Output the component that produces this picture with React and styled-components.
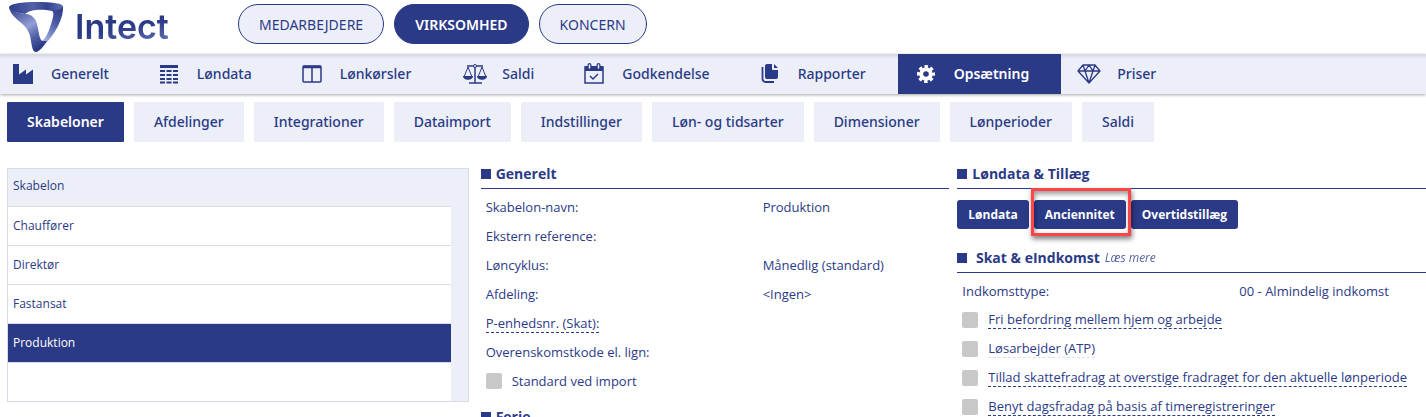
import React, { useState } from 'react';
import styled, { createGlobalStyle } from 'styled-components';

const GlobalStyle = createGlobalStyle`
  :root {
    --primary-color: #2b3a87;
    --soft-color: #eceff8;
    --line-color: #d8dbe8;
  }

  * {
    box-sizing: border-box;
  }

  body {
    margin: 0;
    background: #fff;
    color: var(--primary-color);
    font-family: 'Open Sans', sans-serif;
    font-size: 13px;
    font-weight: 380;
    overflow: hidden;
  }
`;

const Header = styled.header`
  display: flex;
  align-items: flex-start;
  height: 54px;
`;

const Brand = styled.a`
  display: flex;
  flex: 0 0 238px;
  padding-left: 8px;
  color: var(--primary-color);
  text-decoration: none;
`;

const BrandName = styled.span`
  margin-left: 11px;
  background: linear-gradient(170deg, #2b3a87 50%, #7f8ccb 100%);
  background-clip: text;
  color: transparent;
  font-family: Inter, sans-serif;
  font-size: 34px;
  font-weight: 600;
  line-height: 54px;
`;

const PillGroup = styled.div`
  display: flex;
  gap: 10px;
  padding-top: 4px;
`;

const Pill = styled.button`
  height: 40px;
  padding: 0 20px;
  border: 1px solid var(--primary-color);
  border-radius: 20px;
  background: ${({ $active }) => ($active ? 'var(--primary-color)' : 'var(--soft-color)')};
  color: ${({ $active }) => ($active ? '#fff' : 'var(--primary-color)')};
  font-family: 'Noto Sans', sans-serif;
  font-size: 14px;
  font-weight: ${({ $active }) => ($active ? 600 : 400)};
  cursor: pointer;
`;

const MainNav = styled.nav`
  display: flex;
  height: 40px;
  background: linear-gradient(#d4d6e0, var(--soft-color) 5px);
  box-shadow: 0 1px 3px rgba(0, 0, 0, 0.35);
`;

const NavItem = styled.a`
  display: flex;
  align-items: flex-start;
  gap: 15px;
  padding: 0 32px 0 15px;
  background: ${({ $active }) => ($active ? 'var(--primary-color)' : 'transparent')};
  color: ${({ $active }) => ($active ? '#fff' : 'var(--primary-color)')};
  font-family: 'Noto Sans', sans-serif;
  font-size: 14px;
  font-weight: ${({ $active }) => ($active ? 600 : 500)};
  line-height: 40px;
  text-decoration: none;
  white-space: nowrap;

  &:first-child {
    padding-left: 10px;
  }
`;

const NavIcon = styled.svg`
  width: ${({ $wide }) => ($wide ? '29px' : '26px')};
  height: 22px;
  margin-top: 9px;
  fill: none;
  stroke: currentColor;
`;

const SubNav = styled.nav`
  display: flex;
  gap: 10px;
  padding: 8px 7px 0;
`;

const SubNavItem = styled.a`
  padding: 0 20px;
  border-radius: 1px;
  background: ${({ $active }) => ($active ? 'var(--primary-color)' : 'var(--soft-color)')};
  color: ${({ $active }) => ($active ? '#fff' : 'var(--primary-color)')};
  font-family: 'Noto Sans', sans-serif;
  font-size: 14px;
  font-weight: ${({ $active }) => ($active ? 600 : 500)};
  line-height: 40px;
  text-decoration: none;
  white-space: nowrap;
`;

const Columns = styled.main`
  display: grid;
  grid-template-columns: repeat(3, minmax(0, 1fr));
  gap: 8px;
  align-items: start;
  padding: 21px 0 0 4px;
`;

const TemplateList = styled.div`
  margin: 5px 4px 0 3px;
  padding-right: 17px;
  border: 1px solid var(--line-color);
  background: var(--soft-color);
`;

const TemplateTable = styled.table`
  width: 100%;
  border-collapse: separate;
  border-spacing: 0;
  font-size: 12px;
  text-align: left;
`;

const HeadCell = styled.th`
  height: 38px;
  padding: 0 5px 4px;
  border-bottom: 1px solid var(--line-color);
  font-weight: 400;
`;

const Cell = styled.td`
  height: 39px;
  padding: 0 5px 2px;
  border-bottom: 1px solid var(--line-color);
  background: ${({ $active }) => ($active ? 'var(--primary-color)' : '#fff')};
  color: ${({ $active }) => ($active ? '#fff' : 'inherit')};
  font-weight: ${({ $active }) => ($active ? 500 : 400)};
  cursor: pointer;
`;

const EmptyCell = styled.td`
  height: 38px;
  background: #fff;
`;

const Section = styled.section`
  margin-bottom: 10px;
`;

const SectionTitle = styled.h2`
  display: flex;
  align-items: center;
  gap: 5px;
  height: 26px;
  margin: 0 0 4px;
  padding-bottom: 5px;
  border-bottom: 1px solid var(--primary-color);
  font-size: 14px;
  font-weight: 700;

  &::before {
    content: '';
    width: 10px;
    height: 10px;
    margin-top: 2px;
    background: var(--primary-color);
  }
`;

const ReadMore = styled.a`
  color: var(--primary-color);
  font-size: 12px;
  font-style: italic;
  font-weight: 400;
  opacity: 0.8;
  text-decoration: none;
`;

const Field = styled.div`
  display: grid;
  grid-template-columns: 277px 1fr;
  align-items: center;
  height: 29px;
  padding: 0 0 1px 5px;
`;

const CheckField = styled.label`
  display: flex;
  align-items: center;
  gap: 10px;
  height: 29px;
  padding: 0 0 1px 5px;
  white-space: nowrap;
`;

const Checkbox = styled.input`
  appearance: none;
  width: 16px;
  height: 16px;
  margin: 0;
  border-radius: 2px;
  background: #c8c8c8;

  &:checked {
    background: var(--primary-color);
  }
`;

const Hint = styled.span`
  border-bottom: 1px dashed ${({ $faint }) => ($faint ? '#dcdff0' : 'var(--primary-color)')};
  line-height: 17px;
`;

const ButtonRow = styled.div`
  display: flex;
  gap: 5px;
  padding: 7px 0 8px;
`;

const ActionButton = styled.button`
  position: relative;
  height: 29px;
  padding: 0 11px;
  border: 0;
  border-radius: 3px;
  background: var(--primary-color);
  color: #fff;
  font-family: inherit;
  font-size: 12px;
  font-weight: 700;
  cursor: pointer;
`;

const Highlight = styled.span`
  position: absolute;
  z-index: 1;
  inset: -12px -5px -7px -3px;
  border: 3px solid #ff4545;
  box-shadow: 1px 3px 5px rgba(0, 0, 0, 0.5), inset 1px 3px 5px rgba(0, 0, 0, 0.4);
  pointer-events: none;
`;

const Logo = () => (
  <svg width="56" height="54" viewBox="0 0 56 54" aria-hidden="true">
    <defs>
      <linearGradient id="logoBand" x1="0" y1="0" x2="1" y2="0">
        <stop offset="0" stopColor="#2f3e8b" />
        <stop offset="0.45" stopColor="#5361a8" />
        <stop offset="0.7" stopColor="#34438f" />
        <stop offset="1" stopColor="#5f6db3" />
      </linearGradient>
      <linearGradient id="logoLeft" x1="0.1" y1="0" x2="0.6" y2="1">
        <stop offset="0" stopColor="#2f3e8b" />
        <stop offset="0.5" stopColor="#939fd6" />
        <stop offset="0.75" stopColor="#5361a8" />
        <stop offset="1" stopColor="#2b3a87" />
      </linearGradient>
      <linearGradient id="logoRight" x1="0.7" y1="0" x2="0.3" y2="1">
        <stop offset="0" stopColor="#2f3e8b" />
        <stop offset="0.4" stopColor="#4a59a3" />
        <stop offset="1" stopColor="#a5afe0" />
      </linearGradient>
    </defs>
    <path d="M1 7C3 3 18 2 29 2C43 2 53 3 55 6C54 10 48 12 44 11C35 9 23 9 17 14C8 13 2 11 1 7Z" fill="url(#logoBand)" />
    <path d="M55 6C56 19 46 35 38 43L33 41C38 41 43 26 45 17C46 13 45 11 43 10C48 11 53 10 55 6Z" fill="url(#logoRight)" />
    <path d="M1 7C3 11 9 13 17 14C24 14 28 19 29 24C31 32 31 38 34 41L39 41C36 46 31 52 28 52C23 52 24 40 21 33C17 22 3 19 1 7Z" fill="url(#logoLeft)" />
  </svg>
);

const FactoryIcon = () => (
  <NavIcon viewBox="-3 -1 26 22" aria-hidden="true">
    <path d="M0 0h6v10.5l7-5v5l7-5V20H0z" fill="currentColor" stroke="none" />
  </NavIcon>
);

const TableIcon = () => (
  <NavIcon viewBox="0 0 26 22" aria-hidden="true">
    <path d="M4 3.5h18" strokeWidth="3" />
    <path d="M4 8h18M4 12h18M4 16h18M4 19.5h18" strokeWidth="2" strokeDasharray="5 1.5" />
  </NavIcon>
);

const ColumnsIcon = () => (
  <NavIcon viewBox="0 0 26 22" aria-hidden="true">
    <rect x="4" y="3" width="18" height="16" rx="1" strokeWidth="1.5" />
    <path d="M4 4h18" strokeWidth="2.5" />
    <path d="M13 4v15" strokeWidth="1.5" />
  </NavIcon>
);

const ScaleIcon = () => (
  <NavIcon $wide viewBox="-4 0 29 22" aria-hidden="true">
    <path d="M5 3h16M13 3v17M7 20h13" strokeWidth="1.5" />
    <circle cx="13" cy="3" r="1.5" fill="#eceff8" />
    <path d="M6 4L2 14M6 4l4 10M20 4l-4 10M20 4l4 10" />
    <path d="M1 13h10c0 5-10 5-10 0zM15 13h10c0 5-10 5-10 0z" fill="currentColor" stroke="none" />
  </NavIcon>
);

const CalendarIcon = () => (
  <NavIcon viewBox="0 0 26 22" aria-hidden="true">
    <rect x="4" y="4" width="18" height="16" strokeWidth="1.5" />
    <path d="M4 3h18v5H4z" fill="currentColor" stroke="none" />
    <path d="M8.5 2v3M17.5 2v3" strokeWidth="4" strokeLinecap="round" />
    <path d="M8.5 2v3M17.5 2v3" stroke="#eceff8" strokeWidth="1.5" strokeLinecap="round" />
    <path d="M9 13l3 3l5-5" strokeWidth="1.5" />
  </NavIcon>
);

const CopyIcon = () => (
  <NavIcon viewBox="0 0 26 22" aria-hidden="true">
    <path d="M10 1h5v5q0 1 1 1h5v7q0 2-2 2h-9q-2 0-2-2V3q0-2 2-2z" fill="currentColor" stroke="none" />
    <path d="M17 1l4 4h-4z" fill="currentColor" stroke="none" />
    <path d="M5.5 4v12q0 3 3 3H17" strokeWidth="1.8" />
  </NavIcon>
);

const GearIcon = () => (
  <NavIcon viewBox="0 0 26 22" aria-hidden="true">
    <circle cx="13" cy="11" r="4.8" strokeWidth="4" />
    <circle cx="13" cy="11" r="7.5" strokeWidth="3" strokeDasharray="3.4 2.49" strokeDashoffset="1.7" />
  </NavIcon>
);

const DiamondIcon = () => (
  <NavIcon viewBox="0 0 26 22" aria-hidden="true">
    <path
      d="M7 2h12l5 6L13 20L2 8zM2 8h22M7 2l2 6l4 12l4-12l2-6M9 8l4-6l4 6"
      strokeWidth="1.3"
      strokeLinejoin="round"
    />
  </NavIcon>
);

const areas = ['MEDARBEJDERE', 'VIRKSOMHED', 'KONCERN'];

const navItems = [
  { name: 'Generelt', Icon: FactoryIcon },
  { name: 'Løndata', Icon: TableIcon },
  { name: 'Lønkørsler', Icon: ColumnsIcon },
  { name: 'Saldi', Icon: ScaleIcon },
  { name: 'Godkendelse', Icon: CalendarIcon },
  { name: 'Rapporter', Icon: CopyIcon },
  { name: 'Opsætning', Icon: GearIcon },
  { name: 'Priser', Icon: DiamondIcon },
];

const subNavItems = [
  'Skabeloner',
  'Afdelinger',
  'Integrationer',
  'Dataimport',
  'Indstillinger',
  'Løn- og tidsarter',
  'Dimensioner',
  'Lønperioder',
  'Saldi',
];

const templates = ['Chauffører', 'Direktør', 'Fastansat', 'Produktion'];

const fields = [
  { label: 'Skabelon-navn:', value: 'Produktion' },
  { label: 'Ekstern reference:' },
  { label: 'Løncyklus:', value: 'Månedlig (standard)' },
  { label: 'Afdeling:', value: '<Ingen>' },
  { label: 'P-enhedsnr. (Skat):', hint: true },
  { label: 'Overenskomstkode el. lign:' },
];

const taxOptions = [
  { label: 'Fri befordring mellem hjem og arbejde' },
  { label: 'Løsarbejder (ATP)', faint: true },
  { label: 'Tillad skattefradrag at overstige fradraget for den aktuelle lønperiode' },
  { label: 'Benyt dagsfradag på basis af timeregistreringer' },
];

const App = () => {
  const [area, setArea] = useState('VIRKSOMHED');
  const [template, setTemplate] = useState('Produktion');

  return (
    <>
      <GlobalStyle />
      <Header>
        <Brand href="#">
          <Logo />
          <BrandName>Intect</BrandName>
        </Brand>
        <PillGroup>
          {areas.map((name) => (
            <Pill key={name} type="button" $active={name === area} onClick={() => setArea(name)}>
              {name}
            </Pill>
          ))}
        </PillGroup>
      </Header>

      <MainNav>
        {navItems.map(({ name, Icon }) => (
          <NavItem key={name} href="#" $active={name === 'Opsætning'}>
            <Icon />
            {name}
          </NavItem>
        ))}
      </MainNav>

      <SubNav>
        {subNavItems.map((name) => (
          <SubNavItem key={name} href="#" $active={name === 'Skabeloner'}>
            {name}
          </SubNavItem>
        ))}
      </SubNav>

      <Columns>
        <TemplateList>
          <TemplateTable>
            <thead>
              <tr>
                <HeadCell>Skabelon</HeadCell>
              </tr>
            </thead>
            <tbody>
              {templates.map((name) => (
                <tr key={name} onClick={() => setTemplate(name)}>
                  <Cell $active={name === template}>{name}</Cell>
                </tr>
              ))}
              <tr>
                <EmptyCell />
              </tr>
            </tbody>
          </TemplateTable>
        </TemplateList>

        <div>
          <Section>
            <SectionTitle>Generelt</SectionTitle>
            {fields.map(({ label, value, hint }) => (
              <Field key={label}>
                <div>{hint ? <Hint>{label}</Hint> : label}</div>
                <div>{value}</div>
              </Field>
            ))}
            <CheckField>
              <Checkbox type="checkbox" />
              Standard ved import
            </CheckField>
          </Section>
          <Section>
            <SectionTitle>Ferie</SectionTitle>
          </Section>
        </div>

        <div>
          <Section>
            <SectionTitle>Løndata &amp; Tillæg</SectionTitle>
            <ButtonRow>
              <ActionButton type="button">Løndata</ActionButton>
              <ActionButton type="button">
                Anciennitet
                <Highlight />
              </ActionButton>
              <ActionButton type="button">Overtidstillæg</ActionButton>
            </ButtonRow>
          </Section>
          <Section>
            <SectionTitle>
              &nbsp;Skat &amp; eIndkomst <ReadMore href="#">Læs mere</ReadMore>
            </SectionTitle>
            <Field>
              <div>Indkomsttype:</div>
              <div>00 - Almindelig indkomst</div>
            </Field>
            {taxOptions.map(({ label, faint }) => (
              <CheckField key={label}>
                <Checkbox type="checkbox" />
                <Hint $faint={faint}>{label}</Hint>
              </CheckField>
            ))}
          </Section>
        </div>
      </Columns>
    </>
  );
};

export default App;
